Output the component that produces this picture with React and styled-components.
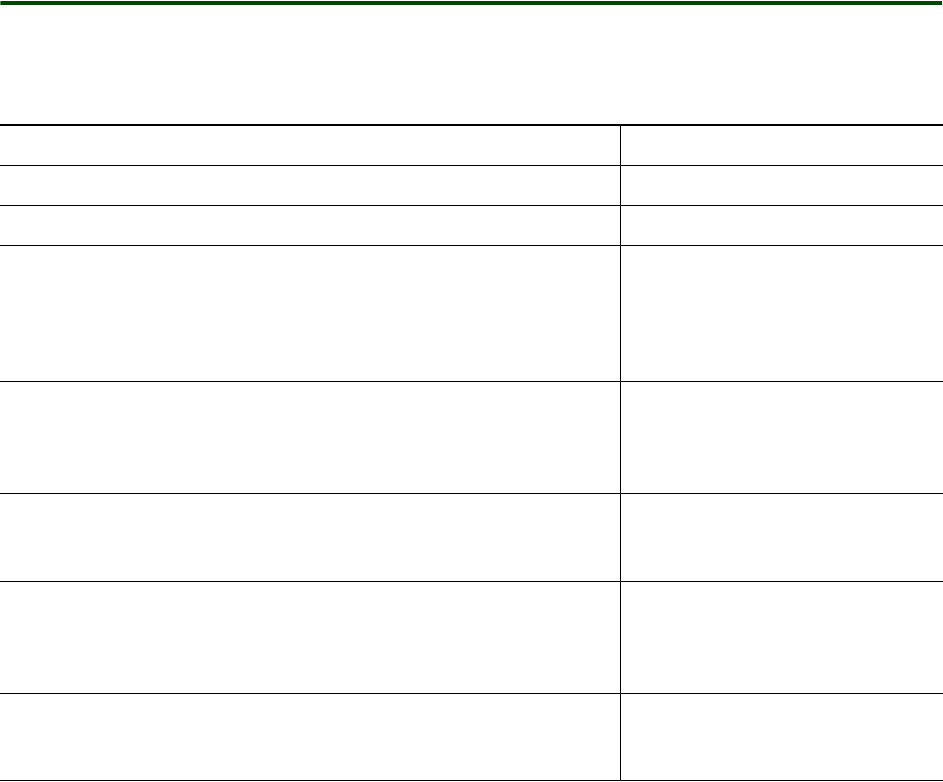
import React from "react";
import styled, { createGlobalStyle } from "styled-components";

const GlobalStyle = createGlobalStyle`
  html, body {
    margin: 0;
    padding: 0;
    background: #fff;
    font-family: "Liberation Sans", Arial, sans-serif;
  }
`;

const rows = [39, 39, 39, 135, 111, 87, 111, 86];

const Page = styled.div`
  width: 943px;
`;

const TopBar = styled.div`
  margin-top: 1px;
  width: 941px;
  height: 4px;
  background: #004800;
  border-left: 1px solid #5f8a5f;
`;

const Table = styled.div`
  margin-top: 119px;
  border-top: 2px solid #000;
  width: 943px;
`;

const Row = styled.div`
  display: grid;
  grid-template-columns: 620px 1fr;
  height: ${(p) => p.$h}px;
  border-bottom: 1px solid #000;
`;

const Cell = styled.div`
  font-size: 13px;
  color: #000;
`;

const SideCell = styled(Cell)`
  border-left: 1px solid #000;
`;

const App = () => {
  return (
    <Page>
      <GlobalStyle />
      <TopBar />
      <Table>
        {rows.map((h, i) => (
          <Row key={i} $h={h}>
            <Cell />
            <SideCell />
          </Row>
        ))}
      </Table>
    </Page>
  );
};

export default App;
